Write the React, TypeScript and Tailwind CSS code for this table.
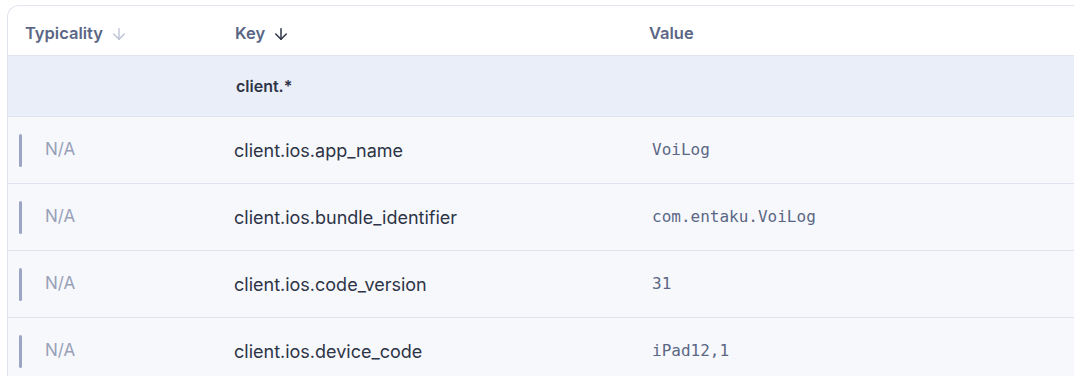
import { ArrowDown } from "lucide-react";

const rows = [
  { key: "client.ios.app_name", value: "VoiLog" },
  { key: "client.ios.bundle_identifier", value: "com.entaku.VoiLog" },
  { key: "client.ios.code_version", value: "31" },
  { key: "client.ios.device_code", value: "iPad12,1" },
];

const App = () => {
  return (
    <div className="h-[376px] w-[1074px] overflow-hidden bg-white pl-[7px] pt-[5px] font-['Inter',sans-serif]">
      <div className="w-[1100px] rounded-tl-xl border-l border-t border-[#dfe4ef]">
        {/* header */}
        <div className="grid h-[50px] grid-cols-[209px_415px_1fr] border-b border-[#dfe4ef] pt-[6px] text-[16.5px] font-semibold text-[#5b6785]">
          <div className="flex items-center gap-[7px] pl-[17px]">
            Typicality
            <ArrowDown size={18} strokeWidth={1.7} className="text-[#b7bfd1]" />
          </div>
          <div className="flex items-center gap-[7px] pl-[18px]">
            Key
            <ArrowDown size={18} strokeWidth={2} className="text-[#2d3446]" />
          </div>
          <div className="flex items-center pl-[17px]">Value</div>
        </div>

        {/* group row */}
        <div className="grid h-[61px] grid-cols-[209px_415px_1fr] border-b border-[#dfe4ef] bg-[#eaeef8] text-[16px] font-semibold text-[#2d3446]">
          <div />
          <div className="flex items-center pl-[19px]">client.*</div>
          <div />
        </div>

        {rows.map((r) => (
          <div
            key={r.key}
            className="grid h-[67px] grid-cols-[209px_415px_1fr] border-b border-[#dfe4ef] bg-[#f7f8fc]"
          >
            <div className="flex items-center pl-[11px]">
              <span className="h-[33px] w-[3px] rounded-full bg-[#9ca6c4]" />
              <span className="ml-[23px] text-[17px] text-[#98a1b8]">N/A</span>
            </div>
            <div className="flex items-center pl-[17px] text-[18px] text-[#2d3446]">
              {r.key}
            </div>
            <div className="flex items-center pl-[20px] font-['DejaVu_Sans_Mono',monospace] text-[16px] text-[#5b6785]">
              {r.value}
            </div>
          </div>
        ))}
      </div>
    </div>
  );
};

export default App;
